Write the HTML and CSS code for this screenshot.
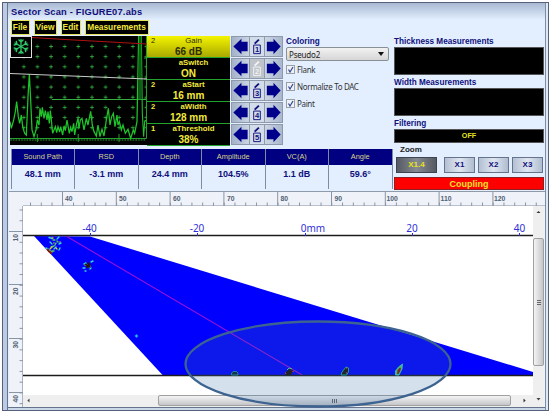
FILE: index.html
```html
<!DOCTYPE html>
<html lang="en">
<head>
    <meta charset="UTF-8">
    <title>Sector Scan</title>
    <link rel="stylesheet" href="styles.css">
</head>
<body>

<div class="window">
    <h1 class="title">Sector Scan - FIGURE07.abs</h1>
    <div class="menu">
        <span class="m-file">File</span>
        <span class="m-view">View</span>
        <span class="m-edit">Edit</span>
        <span class="m-meas">Measurements</span>
    </div>

    <div class="top">
        <div class="left">
            <div class="controls">
                <!-- A-scan -->
                <svg class="scope" width="137" height="109" viewBox="0 0 137 109">
                    <defs>
                        <pattern id="cross" x="6.9" y="5.4" width="13.63" height="10.15" patternUnits="userSpaceOnUse">
                            <path d="M5 5.1h3.8M6.9 3.2v3.8" stroke="#2fae3c" stroke-width="0.9"/>
                        </pattern>
                        <pattern id="stick" x="0" y="102" width="2.72" height="4" patternUnits="userSpaceOnUse">
                            <path d="M1 0v3" stroke="#26a02e" stroke-width="0.9"/>
                        </pattern>
                    </defs>
                    <rect width="137" height="109" fill="#000"/>
                    <rect x="7" y="5" width="129" height="92" fill="url(#cross)"/>
                    <rect y="102" width="136" height="3" fill="url(#stick)"/>
                    <path d="M27.3 98v8M68.2 98v8M109 98v8" stroke="#26a02e"/>
                    <path d="M0 102.5H136.500V0M137 22h-3M137 43h-3M137 63h-3M137 85h-3" stroke="#26a02e" fill="none"/>
                    <path d="M42 63.500H136" stroke="#35b040"/>
                    <g transform="translate(-2 34) scale(.3333)">
                        <polyline fill="none" stroke="#1fc42b" stroke-width="3.8" points="6,155 10,175 17,150 22,125 26,95 31,140 35,160 40,135 44,170 50,190 55,195 60,80 64,12 68,90 72,180 78,200 84,180 88,150 93,165 96,115 100,140 103,112 108,145 112,122 117,150 120,125 124,160 127,122 130,150 134,190 142,170 146,188 150,170 155,186 158,170 164,195 168,168 172,182 177,150 184,190 188,172 192,185 197,160 200,195 206,160 210,145 213,175 217,150 222,145 228,180 232,160 235,145 240,165 248,124 253,165 258,185 265,198 270,165 276,200 282,178 288,198 295,150 301,115 306,165 311,140 316,130 321,170 327,135 330,165 334,155 340,180 345,165 352,190 360,178 368,205 376,180 380,190 387,155 392,-102"/>
                        <polyline fill="none" stroke="#1fc42b" stroke-width="3.2" points="400,-102 403,130 407,200 410,155 414,150"/>
                        <path d="M393 -102h7l1 190h-11z" fill="#0c5c14"/>
                    </g>
                    <path d="M22 1.500L55 3.500 137 8" stroke="#b01212" fill="none"/>
                    <path d="M0 37.500L137 43" stroke="#c9c9c9"/>
                    <rect x="0.500" y="0.500" width="21" height="21" fill="#000" stroke="#ddd"/>
                    <g transform="translate(11 10.500)" stroke="#2ecb6a" stroke-width="1.3" fill="none">
                        <path id="arm" d="M0 -7.500V7.500M-2.500 -7L0 -4.500 2.500 -7M-2.500 7L0 4.500 2.500 7"/>
                        <use href="#arm" transform="rotate(60)"/>
                        <use href="#arm" transform="rotate(120)"/>
                    </g>
                </svg>

                <div class="params">
                    <div class="param active"><i>2</i><span>Gain</span><b>66 dB</b></div>
                    <div class="param"><span>aSwitch</span><b>ON</b></div>
                    <div class="param"><i>2</i><span>aStart</span><b>16 mm</b></div>
                    <div class="param"><i>2</i><span>aWidth</span><b>128 mm</b></div>
                    <div class="param"><i>1</i><span>aThreshold</span><b>38%</b></div>
                </div>

                <svg width="0" height="0" class="defs">
                    <symbol id="prev" viewBox="0 0 17 20"><path d="M1 10L9.500 1.800V5H16V15H9.500V18.200z" fill="#00008b"/></symbol>
                    <symbol id="next" viewBox="0 0 17 20"><path d="M16 10L8.500 1.800V5H1.500V15H8.500V18.200z" fill="#00008b"/></symbol>
                    <symbol id="pen" viewBox="0 0 14 20">
                        <path d="M4.500 7L9 2.800" stroke="currentColor" stroke-width="2"/>
                        <path d="M3.500 8.500H10.500V17.500H3.500z" stroke="currentColor" fill="none"/>
                    </symbol>
                </svg>
                <div class="steps">
                    <div class="step"><svg><use href="#prev"/></svg><em><svg><use href="#pen"/></svg><u>1</u></em><svg><use href="#next"/></svg></div>
                    <div class="step off"><svg><use href="#prev"/></svg><em><svg><use href="#pen"/></svg><u>2</u></em><svg><use href="#next"/></svg></div>
                    <div class="step"><svg><use href="#prev"/></svg><em><svg><use href="#pen"/></svg><u>3</u></em><svg><use href="#next"/></svg></div>
                    <div class="step"><svg><use href="#prev"/></svg><em><svg><use href="#pen"/></svg><u>4</u></em><svg><use href="#next"/></svg></div>
                    <div class="step"><svg><use href="#prev"/></svg><em><svg><use href="#pen"/></svg><u>5</u></em><svg><use href="#next"/></svg></div>
                </div>

                <div class="coloring">
                    <div class="label">Coloring</div>
                    <div class="select"><span>Pseudo2</span><svg width="6" height="4"><path d="M0 0h6L3 4z" fill="#111"/></svg></div>
                    <div class="check"><svg width="9" height="9"><path d="M1.500 3.500L3 6 6 1" fill="none" stroke="#33478c" stroke-width="1.2"/></svg>Flank</div>
                    <div class="check"><svg width="9" height="9"><path d="M1.500 3.500L3 6 6 1" fill="none" stroke="#33478c" stroke-width="1.2"/></svg>Normalize To DAC</div>
                    <div class="check"><svg width="9" height="9"><path d="M1.500 3.500L3 6 6 1" fill="none" stroke="#33478c" stroke-width="1.2"/></svg>Paint</div>
                </div>
            </div>

            <div class="readout">
                <div><span>Sound Path</span><b>48.1 mm</b></div>
                <div><span>RSD</span><b>-3.1 mm</b></div>
                <div><span>Depth</span><b>24.4 mm</b></div>
                <div><span>Amplitude</span><b>104.5%</b></div>
                <div><span>VC(A)</span><b>1.1 dB</b></div>
                <div><span>Angle</span><b>59.6°</b></div>
            </div>
        </div>

        <div class="side">
            <div class="label">Thickness Measurements</div>
            <div class="box"></div>
            <div class="label">Width Measurements</div>
            <div class="box"></div>
            <div class="label">Filtering</div>
            <div class="box filter">OFF</div>
            <div class="zoom">
                <div class="zoom-label">Zoom</div>
                <div class="zoom-buttons">
                    <span class="btn on">X1.4</span>
                    <span class="btn">X1</span>
                    <span class="btn">X2</span>
                    <span class="btn">X3</span>
                </div>
            </div>
            <div class="coupling">Coupling</div>
        </div>
    </div>

    <div class="scan">
        <svg class="ruler-top" width="536" height="14" viewBox="9 192 536 14">
            <defs>
                <pattern id="minor" x="62.300" y="202" width="10.76" height="4" patternUnits="userSpaceOnUse"><path d="M0.500 0v4" stroke="#8795a5"/></pattern>
                <pattern id="major" x="62" y="192" width="53.800" height="14" patternUnits="userSpaceOnUse"><path d="M0.500 0v14" stroke="#8795a5"/></pattern>
            </defs>
            <rect x="28" y="202.500" width="510" height="3.500" fill="url(#minor)"/>
            <rect x="62" y="192" width="470" height="14" fill="url(#major)"/>
            <g class="ruler-text">
                <text x="65" y="201">40</text><text x="119" y="201">50</text><text x="173" y="201">60</text>
                <text x="227" y="201">70</text><text x="280.500" y="201">80</text><text x="334.500" y="201">90</text>
                <text x="386.500" y="201">100</text><text x="440.500" y="201">110</text><text x="494" y="201">120</text>
            </g>
            <path d="M23 205.700H545" stroke="#8f9aa8" stroke-width="0.700"/>
        </svg>

        <div class="view">
            <svg class="ruler-left" width="14" height="201" viewBox="9 206 14 201">
                <defs>
                    <pattern id="vminor" x="19" y="209.500" width="4" height="10.76" patternUnits="userSpaceOnUse"><path d="M0 0.500h4" stroke="#8795a5"/></pattern>
                </defs>
                <rect x="19.500" y="207" width="3.500" height="198" fill="url(#vminor)"/>
                <path d="M9 231.500h14M9 284.500h14M9 338.500h14M9 392.500h14" stroke="#8795a5"/>
                <g class="ruler-text">
                    <text transform="translate(18 241.500) rotate(-90)">10</text>
                    <text transform="translate(18 295) rotate(-90)">20</text>
                    <text transform="translate(18 348.500) rotate(-90)">30</text>
                    <text transform="translate(18 402.500) rotate(-90)">40</text>
                </g>
                <path d="M22.600 206V407" stroke="#8f9aa8" stroke-width="0.800"/>
            </svg>

            <div class="pane">
                <svg class="sector" width="510" height="189" viewBox="23 206 510 189">
                    <rect x="23" y="206" width="510" height="189" fill="#fff"/>
                    <path d="M34 236L90 236.500 533 372V375.500H163z" fill="#0000fe"/>
                    <path d="M66 236L303 375.500" stroke="#9a10d8" stroke-width="1.100"/>
                    <path d="M23 235.500H533M23 375.500H533" stroke="#1c1c1c" stroke-width="1.300"/>
                    <path d="M90.500 233v3M197.500 233v3M305.500 233v3M412.500 233v3M519.500 233v3" stroke="#2c2cd0"/>
                    <g class="axis-text">
                        <text x="89.500" y="232">-40</text><text x="197" y="232">-20</text><text x="313" y="232">0mm</text>
                        <text x="412" y="232">20</text><text x="519.500" y="232">40</text>
                    </g>
                    <!-- echoes near the surface -->
                    <g stroke-width="1.400" stroke-linecap="round">
                        <path d="M49 237.500l3 1M50 242l2 2M57 239l2-2M59 244l2-1M54 249l2-2M59 250l1-2M46 248l2 1" stroke="#2fd6d8"/>
                        <path d="M53 240l2 0M55 245l1-2M51 247l3-1M57 241l1 1M52 251l2 0M49 250l3 2" stroke="#55c860"/>
                        <path d="M56 248l1 1M52 238l1 0M50 249l2-2M60 242l0 0M54 243l0 0" stroke="#d8c832"/>
                        <path d="M47.500 249.500l1.500 2M50 252l1 1" stroke="#8c1408" stroke-width="1.800"/>
                        <path d="M83 268l2 0M85 271l1 0M91 262l2-1M84 264l2-1M91 268l-1 1" stroke="#2fd6d8"/>
                        <path d="M85 265l2 0M89 267l1-1" stroke="#8fd060"/>
                        <path d="M85.500 264.500l4 2M88 263l2 2M87 267l1 0" stroke="#2a1408" stroke-width="1.700"/>
                        <path d="M136.500 335v2M135.500 336h2" stroke="#20b8e8"/>
                    </g>
                    <!-- echoes on the back wall -->
                    <path d="M231.500 375v-2l2-1.500h3l1.500 1.500v2z" fill="#0b2030" stroke="#1fae9a" stroke-width="0.800"/>
                    <path d="M285 375l1-3 3-3 3 0 1 2-2 4z" fill="#1a0d0a"/>
                    <path d="M285 373.500l1-.5M293 371l0 1" stroke="#d43a20" stroke-width="1.400"/>
                    <path d="M287 370l2-2 3 1" stroke="#48c8a0" fill="none"/>
                    <path d="M341 375l1-3 4-5 2.500 1 0 4-2 3z" fill="#16140c" stroke="#23b790" stroke-width="0.900"/>
                    <path d="M346 368l1 0M346 373l1 0" stroke="#d86a20" stroke-width="1.200"/>
                    <path d="M395.500 375l0-4 3-4 4-3-.5 5-3 6z" fill="#54c85c" stroke="#2fd0c8" stroke-width="0.900"/>
                    <path d="M397 374l.5-4 2.500-2.500 1 1-1 3-1.500 2.500z" fill="#8a1c08"/>
                </svg>
                <div class="scroll-h">
                    <svg width="11" height="11"><path d="M6.500 3.500v4L4.300 5.500z" fill="#444"/></svg>
                    <div class="thumb"><span></span><span></span><span></span></div>
                    <svg width="11" height="11"><path d="M2.500 3.500v4L4.700 5.500z" fill="#333"/></svg>
                </div>
            </div>

            <div class="scroll-v">
                <svg width="11" height="11"><path d="M3.500 7h4L5.500 5z" fill="#333"/></svg>
                <div class="thumb"><span></span><span></span><span></span></div>
                <svg width="11" height="11"><path d="M3.500 4h4L5.500 6.500z" fill="#444"/></svg>
            </div>
        </div>
    </div>

    <!-- highlighted area lies over the scan and its scrollbar -->
    <svg class="highlight" width="270" height="90" viewBox="183 319 270 90">
        <ellipse cx="318" cy="364" rx="132.500" ry="42.500" fill="#3c73aa" fill-opacity="0.220" stroke="#3d6390" stroke-width="2.300"/>
    </svg>
</div>

</body>
</html>
```
FILE: styles.css
```css
* {
    box-sizing: border-box;
}

body {
    margin: 0;
    padding: 2px 0 0 2px;
    height: 413px;
    overflow: hidden;
    background: #fff;
    font-family: "Liberation Sans", Arial, sans-serif;
}

svg {
    display: block;
    flex: none;
}

.window {
    position: relative;
    width: 547px;
    height: 409px;
    padding: 0 2px 0 6px;
    border: 1px solid #55617a;
    background: linear-gradient(#a9bad3 0, #e3efff 17px, #e3efff 100%);
    box-shadow: inset 4px 0 #bccbe3, inset 5px 0 #66738c, inset -2px 0 #dfe9f6, inset -3px 0 #7d8ba3, inset 0 -2px #cbd8ea, inset 0 -3px #66738c;
}

.title {
    margin: 0;
    padding: 3px 0 0 2px;
    height: 17px;
    font-size: 9.3px;
    letter-spacing: 0.2px;
    line-height: 12px;
    color: #10107c;
}

/* menu */

.menu {
    display: flex;
    gap: 4px;
    height: 16px;
    padding-left: 1.5px;
}

.menu span {
    height: 15px;
    border: 1px solid #e4e45c;
    background: #000;
    color: #f0e838;
    font-size: 8.4px;
    font-weight: bold;
    line-height: 13px;
    text-align: center;
    white-space: nowrap;
}

.m-file { width: 19px; }
.m-view { width: 23px; }
.m-edit { width: 20px; }
.m-meas { width: 64px; }

.top {
    display: flex;
    height: 155px;
}

.left {
    width: 385px;
}

.controls {
    display: flex;
    height: 113px;
    padding-left: 1px;
}

.defs {
    position: absolute;
}

/* parameters */

.params {
    width: 83px;
    height: 110px;
    background: #000;
}

.param {
    display: grid;
    grid-template-columns: 8px 1fr;
    grid-template-rows: 10px 11px;
    height: 22px;
    padding-left: 2px;
    border-bottom: 1px solid #22a32c;
    color: #f3ea3c;
    text-align: center;
    font-weight: bold;
}

.param i {
    grid-column: 1;
    font-style: normal;
    font-size: 7.5px;
    line-height: 9px;
}

.param span {
    grid-column: 2;
    grid-row: 1;
    font-size: 7.8px;
    line-height: 10px;
}

.param b {
    grid-column: 1 / 3;
    grid-row: 2;
    padding-right: 2px;
    font-size: 10px;
    line-height: 12px;
}

.param.active {
    background: linear-gradient(#f4f400, #a9a900);
    color: #2c2c00;
}

.param.active i,
.param.active span {
    font-weight: normal;
}

.steps {
    width: 53px;
    padding-left: 1px;
}

.step {
    display: flex;
    height: 21px;
    margin-bottom: 1px;
    border: 1px solid #8e99ab;
    background: linear-gradient(90deg, #a3b2c8, #dde5f0 50%, #a9b7cc);
}

.step > svg {
    width: 17px;
    height: 19px;
}

.step em {
    display: grid;
    width: 16px;
    height: 19px;
    border: solid #8e99ab;
    border-width: 0 1px;
    background: #d3dce9;
    color: #10107c;
    font-style: normal;
}

.step em svg {
    grid-area: 1 / 1;
    width: 14px;
    height: 19px;
}

.step u {
    grid-area: 1 / 1;
    padding-top: 7.5px;
    font-size: 7.5px;
    font-weight: bold;
    line-height: 10px;
    text-align: center;
    text-decoration: none;
}

.step.off em {
    color: #f3f3f3;
    background: #bfc4cb;
}

/* coloring */

.label {
    color: #10107c;
    font-size: 8.2px;
    font-weight: bold;
    line-height: 11px;
    white-space: nowrap;
}

.coloring {
    width: 107px;
    margin-left: 3px;
    font-family: "Noto Sans", Tahoma, sans-serif;
}

.coloring .label {
    font-family: "Liberation Sans", Arial, sans-serif;
}

.select {
    display: flex;
    align-items: center;
    justify-content: space-between;
    width: 103px;
    height: 14px;
    margin-bottom: 4px;
    padding: 0 4px 0 2px;
    border: 1px solid #8a8f96;
    border-radius: 2px;
    background: linear-gradient(#f2f2f2, #d6d6d6);
    font-size: 8px;
    letter-spacing: -0.2px;
    color: #222;
}

.check {
    display: flex;
    align-items: center;
    gap: 2px;
    height: 9px;
    margin-bottom: 8px;
    font-size: 8px;
    letter-spacing: -0.35px;
    color: #333;
    white-space: nowrap;
}

.check svg {
    border: 1px solid #9aa0a8;
    background: #eef2f8;
}

/* readout */

.readout {
    display: flex;
    width: 382px;
    margin-left: 1.5px;
    height: 40px;
}

.readout div {
    flex: 1;
    border-left: 1px solid #7f8ba0;
    text-align: center;
    white-space: nowrap;
}

.readout div:last-child {
    border-right: 1px solid #7f8ba0;
}

.readout span {
    display: block;
    height: 16px;
    background: #000080;
    color: #d9d68c;
    font-size: 7.4px;
    line-height: 15px;
}

.readout b {
    display: block;
    color: #10107c;
    font-size: 9px;
    line-height: 18px;
}

/* right column */

.side {
    width: 150px;
}

.side .box {
    height: 28px;
    margin-bottom: 2px;
    background: #000;
    border: 1px solid #555;
}

.side .box.filter {
    height: 14px;
    color: #e4e41e;
    font-size: 7.2px;
    font-weight: bold;
    line-height: 12px;
    text-align: center;
}

.zoom {
    height: 32px;
    padding-left: 2px;
}

.zoom-label {
    height: 12px;
    padding-left: 4px;
    font-size: 8px;
    font-weight: bold;
    line-height: 10px;
    color: #222;
}

.zoom-buttons {
    display: flex;
    gap: 3px;
}

.btn {
    width: 31px;
    height: 16px;
    border: 1px solid #66738c;
    background: linear-gradient(90deg, #b3c0d3, #dfe6f0 50%, #b0bdd0);
    color: #10107c;
    font-size: 8px;
    font-weight: bold;
    line-height: 14px;
    text-align: center;
}

.btn.on {
    width: 41px;
    margin-right: 4px;
    border-color: #3d4450;
    background: linear-gradient(90deg, #555a63, #858a92 50%, #555a63);
    color: #e8e020;
}

.coupling {
    height: 13px;
    border: 1px solid #8c2020;
    background: #fe0000;
    color: #f3e42c;
    font-size: 9px;
    font-weight: bold;
    line-height: 12px;
    text-align: center;
}

/* scan */

.scan {
    width: 536px;
    border-top: 1px solid #8f9aa8;
    background: #eff2f9;
}

.ruler-text {
    font-size: 6.8px;
    font-weight: bold;
    fill: #4f5f72;
}

.axis-text {
    font-family: "Noto Sans", "Open Sans", sans-serif;
    font-size: 10px;
    text-anchor: middle;
    fill: #3030d8;
}

.view {
    display: flex;
    height: 201px;
}

.pane {
    width: 510px;
}

.scroll-h {
    display: flex;
    height: 12px;
    background: #efefef;
}

.scroll-h .thumb {
    display: flex;
    justify-content: center;
    align-items: center;
    gap: 1px;
    width: 353px;
    height: 11px;
    margin: 0 10px 0 124px;
    border: 1px solid #a0a0a0;
    border-radius: 2px;
    background: linear-gradient(#f4f4f4, #c4c5c9);
}

.scroll-h .thumb span {
    width: 1px;
    height: 4px;
    background: #666;
}

.scroll-v {
    width: 11px;
    background: #efefef;
}

.scroll-v .thumb {
    display: flex;
    flex-direction: column;
    justify-content: center;
    align-items: center;
    gap: 1px;
    height: 128px;
    margin: 21px 0 28px;
    border: 1px solid #a0a0a0;
    border-radius: 2px;
    background: linear-gradient(90deg, #f4f4f4, #c4c5c9);
}

.scroll-v .thumb span {
    width: 4px;
    height: 1px;
    background: #666;
}

.highlight {
    position: absolute;
    left: 180px;
    top: 316px;
}
```
